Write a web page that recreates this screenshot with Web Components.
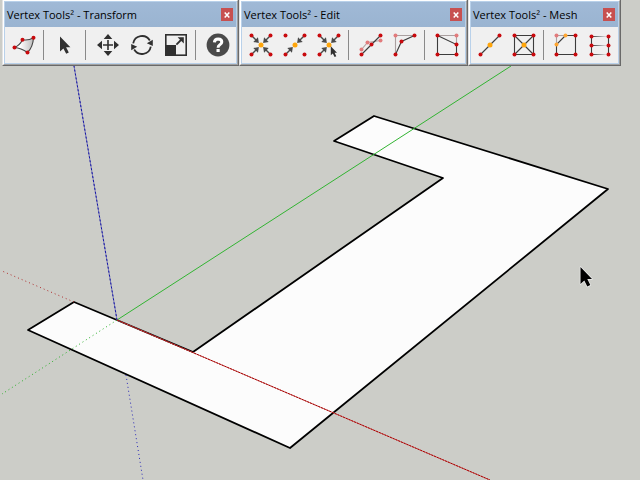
<!DOCTYPE html>
<html lang="en">
<head>
<meta charset="utf-8">
<title>Vertex Tools</title>
<style>
html, body { margin: 0; height: 100%; }
body { background: #cccdc8; overflow: hidden; font-family: "Open Sans", "Noto Sans", sans-serif; }
</style>
</head>
<body>
<model-viewport>
  <tool-palette heading="Vertex Tools² - Transform">
    <tool-button icon="gizmo" label="Vertex mode"></tool-button><tool-divider></tool-divider>
    <tool-button icon="select" label="Select"></tool-button><tool-divider></tool-divider>
    <tool-button icon="move" label="Move"></tool-button><tool-button icon="rotate" label="Rotate"></tool-button><tool-button icon="scale" label="Scale"></tool-button><tool-divider></tool-divider>
    <tool-button icon="help" label="Help"></tool-button>
  </tool-palette>
  <tool-palette heading="Vertex Tools² - Edit">
    <tool-button icon="merge" label="Merge"></tool-button><tool-button icon="mergeTwo" label="Merge nearest"></tool-button><tool-button icon="mergeAt" label="Merge at cursor"></tool-button><tool-divider></tool-divider>
    <tool-button icon="linear" label="Make co-linear"></tool-button><tool-button icon="bend" label="Bend"></tool-button><tool-divider></tool-divider>
    <tool-button icon="planar" label="Make planar"></tool-button>
  </tool-palette>
  <tool-palette heading="Vertex Tools² - Mesh">
    <tool-button icon="insert" label="Insert vertex"></tool-button><tool-button icon="center" label="Insert center"></tool-button><tool-divider></tool-divider>
    <tool-button icon="corner" label="Split corner"></tool-button><tool-button icon="bridge" label="Bridge"></tool-button>
  </tool-palette>
</model-viewport>
<script>
const dots = (pts, color = "#c80a0e", r = 2) => pts.map(([x, y]) => `<circle cx="${x}" cy="${y}" r="${r}" fill="${color}"/>`).join("");
const red = (...p) => dots(p), pink = (...p) => dots(p, "#e27b7c"), gold = (...p) => dots(p, "#ffa50a", 2.5);
const line = (d, c = "#3c3c3c") => `<path d="${d}" fill="none" stroke="${c}" stroke-width="1.1"/>`;
const arrow = deg => `<g transform="rotate(${deg} 12 12)"><path d="M0 12H6" stroke="#4a4a4a" stroke-width="1.4"/><path d="M4.4 8.7L9 12L4.4 15.3Z" fill="#4a4a4a"/></g>`;
const corners = [[2.5, 2.5], [21.5, 2.5], [2.5, 21.5], [21.5, 21.5]];
const ICONS = {
  gizmo: `<defs><linearGradient id="g" x1="0" x2="1"><stop offset=".3" stop-color="#fff"/><stop offset="1" stop-color="#bbb"/></linearGradient></defs><path d="M2.5 14.5Q8 12 10.5 6.7Q16 8 21.5 4.7Q21 14 15.5 19.5Q9 15 2.5 14.5Z" fill="url(#g)" stroke="#444" stroke-width="1.1"/>` + red([2.5, 14.5], [10.5, 6.7], [21.5, 4.7], [15.5, 19.5]),
  select: `<path d="M6 3.5V18.6L9.4 15.4L12.2 20.7L14.8 19.4L12.1 14.2H16.4Z" fill="#303030"/>`,
  move: `<path d="M12 1L16.3 6H7.7ZM12 23L16.3 18H7.7ZM1 12L6 7.7V16.3ZM23 12L18 7.7V16.3Z" fill="#303030"/><path d="M12 7V17M7 12H17" stroke="#303030" stroke-width="1.6"/>`,
  rotate: `<g fill="none" stroke="#303030" stroke-width="1.8"><path d="M3.2 10.4A9 9 0 0 1 19.8 7.5"/><path d="M20.8 13.6A9 9 0 0 1 4.2 16.5"/></g><path d="M22.8 6.8V13.1L16.8 10.3ZM1.2 17.2V10.9L7.2 13.7Z" fill="#303030"/>`,
  scale: `<rect x="1.8" y="1.8" width="20.4" height="20.4" fill="#f0f0f0" stroke="#303030" stroke-width="1.6"/><path d="M1 12H12V23H1Z" fill="#303030"/><path d="M12.4 11.6L18 6" stroke="#303030" stroke-width="1.8"/><path d="M13.6 4.3H19.8V10.5Z" fill="#303030"/>`,
  help: `<circle cx="12" cy="12" r="11.4" fill="#4a4a4a"/><path d="M8.4 9.4Q8.6 6 12.1 6Q15.8 6.1 15.8 9Q15.8 10.8 13.6 12Q12.1 12.9 12.1 14.8" fill="none" stroke="#fff" stroke-width="3"/><rect x="10.5" y="16" width="3.2" height="3" fill="#fff"/>`,
  merge: arrow(45) + arrow(135) + arrow(225) + arrow(315) + red(...corners) + gold([12, 12]),
  mergeTwo: arrow(135) + arrow(315) + red(...corners) + gold([12, 12]),
  mergeAt: arrow(45) + arrow(135) + arrow(315) + red(corners[0], corners[1], corners[2]) + gold([12, 12]) + `<path d="M13.8 13.2V22.3L15.8 20.4L17.6 24L19.3 23.2L17.6 19.7H20Z" fill="#303030"/>`,
  linear: line("M2.5 16.5L8.5 9.5L21.5 7.5", "#b5a0a0") + line("M2.5 21.5L21.5 2.5") + pink([2.5, 16.5], [8.5, 9.5], [21.5, 7.5]) + red([2.5, 21.5], [12.5, 11.5], [21.5, 2.5]),
  bend: line("M2.5 21.5V2.5H21.5", "#aaa0a0") + line("M2.5 21.5L8.5 8.5L21.5 2.5") + pink([2.5, 2.5]) + red([2.5, 21.5], [8.5, 8.5], [21.5, 2.5]),
  planar: line("M2.5 2.5H21.5V11", "#aaa0a0") + line("M2.5 2.5L21.5 11.5V21.5H2.5Z") + pink([21.5, 2.5]) + red([2.5, 2.5], [21.5, 11.5], [21.5, 21.5], [2.5, 21.5]),
  insert: line("M2.5 21.5L21.5 2.5") + red([2.5, 21.5], [21.5, 2.5]) + gold([12, 12]),
  center: line("M2.5 2.5H21.5V21.5H2.5ZM2.5 2.5L21.5 21.5M21.5 2.5L2.5 21.5") + red(...corners) + gold([12, 12]),
  corner: line("M2.5 11.5V2.5H11.5", "#aaa0a0") + line("M11.5 2.5H21.5V21.5H2.5V11.5L11.5 2.5") + pink([2.5, 2.5]) + red([21.5, 2.5], [21.5, 21.5], [2.5, 21.5]) + dots([[2.5, 11.5], [11.5, 2.5]], "#ffa530"),
  bridge: `<defs><linearGradient id="f" gradientUnits="userSpaceOnUse" x1="3" x2="21" y1="0" y2="0"><stop offset="0" stop-color="#333"/><stop offset=".75" stop-color="#ccc"/><stop offset="1" stop-color="#eee"/></linearGradient></defs>` + line("M3.5 3.5V21.5M20.5 3.5V21.5") + `<path d="M3.5 3H18V4H3.5ZM3.5 12H18V13H3.5ZM3.5 21H18V22H3.5Z" fill="url(#f)"/>` + red([3.5, 3.5], [3.5, 12.5], [3.5, 21.5], [20.5, 3.5], [20.5, 12.5], [20.5, 21.5])
};

class ToolButton extends HTMLElement {
  connectedCallback() {
    this.attachShadow({ mode: "open" }).innerHTML = `<style>
      :host { display: block; }
      button { display: grid; place-items: center; width: 34px; height: 34px; margin: 0; padding: 0; border: 0; background: none; }
      svg { display: block; width: 24px; height: 24px; overflow: visible; }
    </style><button type="button" aria-label="${this.getAttribute("label")}"><svg viewBox="0 0 24 24" aria-hidden="true">${ICONS[this.getAttribute("icon")]}</svg></button>`;
  }
}
class ToolDivider extends HTMLElement {
  connectedCallback() {
    this.attachShadow({ mode: "open" }).innerHTML = `<style>
      :host { display: block; box-sizing: border-box; width: 8px; padding: 2px 5px 2px 2px; }
      div { height: 100%; background: #898989; }
    </style><div></div>`;
  }
}
class ToolPalette extends HTMLElement {
  connectedCallback() {
    this.attachShadow({ mode: "open" }).innerHTML = `<style>
      :host { display: block; box-sizing: border-box; background: #f0f0f0; border: solid; border-width: 0 1px 1px; border-color: #e3e3e3 #696969 #696969 #e3e3e3; }
      section { border: 1px solid; border-color: #fff #a0a0a0 #a0a0a0 #fff; }
      .frame { border: 1px solid #b9d1ea; }
      header { display: flex; align-items: center; justify-content: space-between; height: 25px; padding: 0 3px 0 2px; background: linear-gradient(#a0b9d6, #9ab4d1); }
      h2 { margin: 0; font-size: 11px; line-height: 16px; font-weight: 500; color: #000; white-space: nowrap; }
      button { display: grid; place-items: center; width: 12px; height: 13px; margin: 0; padding: 0; border: 0; background: #c75050; }
      svg { display: block; width: 6px; height: 6px; }
      .tools { display: flex; height: 34px; padding: 1px 1px 1px 2px; }
    </style><section><div class="frame"><header><h2>${this.getAttribute("heading")}</h2>
      <button type="button" aria-label="Close"><svg viewBox="0 0 6 6" aria-hidden="true"><path d="M.7 .5L5.3 5.5M5.3 .5L.7 5.5" stroke="#fff" stroke-width="1.5"/></svg></button></header>
      <div class="tools"><slot></slot></div></div></section>`;
  }
}
class ModelViewport extends HTMLElement {
  connectedCallback() {
    this.attachShadow({ mode: "open" }).innerHTML = `<style>
      :host { display: grid; grid-template: minmax(0, 1fr) / minmax(0, 1fr); height: 100%; background: #cccdc8; }
      .scene, nav { grid-area: 1 / 1; }
      .scene { display: block; width: 100%; height: 100%; }
      nav { display: flex; align-items: flex-start; align-self: start; padding-left: 2px; }
    </style>
    <svg class="scene" viewBox="0 0 640 480" preserveAspectRatio="xMinYMin slice" role="img" aria-label="Model with axes">
      <path d="M74 302L193 352L443 178L334 141L374 116L608 189L290 448L28 330Z" fill="#fcfcfc" stroke="#000" stroke-width="1.8" stroke-linejoin="round"/>
      <g fill="none" stroke-width="1">
        <path d="M117 320L511 66" stroke="#32b432"/>
        <path d="M117 320L73 60" stroke="#7878b4"/>
        <path d="M117 320L73 60" stroke="#1414a8" stroke-dasharray="2 2"/>
        <path d="M117 320L490 480" stroke="#c86464"/>
        <path d="M117 320L490 480" stroke="#a80000" stroke-dasharray="2 1"/>
        <g stroke-dasharray="1 3">
          <path d="M117 320L2 394" stroke="#28ae28"/>
          <path d="M74 302L2 271" stroke="#b03030"/>
          <path d="M126 375L143 480" stroke="#2828b8"/>
        </g>
      </g>
      <path d="M580.5 267V284L584.3 280.5L587.3 286.5L590.3 285L587.3 279H592Z" fill="#000" stroke="#eee" stroke-width="1.4" stroke-linejoin="round" paint-order="stroke"/>
    </svg>
    <nav aria-label="Toolbars"><slot></slot></nav>`;
  }
}
customElements.define("tool-button", ToolButton);
customElements.define("tool-divider", ToolDivider);
customElements.define("tool-palette", ToolPalette);
customElements.define("model-viewport", ModelViewport);
</script>
</body>
</html>
